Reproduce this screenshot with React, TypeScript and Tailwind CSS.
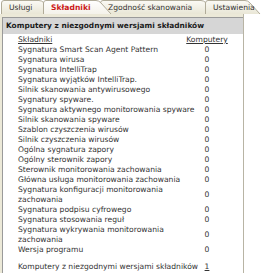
import React from "react";

const rows: { name: string; n: string }[] = [
  { name: "Sygnatura Smart Scan Agent Pattern", n: "0" },
  { name: "Sygnatura wirusa", n: "0" },
  { name: "Sygnatura IntelliTrap", n: "0" },
  { name: "Sygnatura wyjątków IntelliTrap.", n: "0" },
  { name: "Silnik skanowania antywirusowego", n: "0" },
  { name: "Sygnatury spyware.", n: "0" },
  { name: "Sygnatura aktywnego monitorowania spyware", n: "0" },
  { name: "Silnik skanowania spyware", n: "0" },
  { name: "Szablon czyszczenia wirusów", n: "0" },
  { name: "Silnik czyszczenia wirusów", n: "0" },
  { name: "Ogólna sygnatura zapory", n: "0" },
  { name: "Ogólny sterownik zapory", n: "0" },
  { name: "Sterownik monitorowania zachowania", n: "0" },
  { name: "Główna usługa monitorowania zachowania", n: "0" },
  { name: "Sygnatura konfiguracji monitorowania zachowania", n: "0" },
  { name: "Sygnatura podpisu cyfrowego", n: "0" },
  { name: "Sygnatura stosowania reguł", n: "0" },
  { name: "Sygnatura wykrywania monitorowania zachowania", n: "0" },
  { name: "Wersja programu", n: "0" },
];

function Tab({ label, w, active, id }: { label: string; w: number; active?: boolean; id: number }) {
  return (
    <div className={"relative h-[14px] shrink-0 " + (active ? "z-10" : "")} style={{ width: w }}>
      <svg className="absolute left-0 top-0" width={w + 12} height={14}>
        <defs>
          <linearGradient id={"tabg" + id} x1="0" y1="0" x2="0" y2="1">
            <stop offset="0" stopColor={active ? "#ffffff" : "#fbfaf5"} />
            <stop offset="1" stopColor={active ? "#f4f2ea" : "#e9e6d6"} />
          </linearGradient>
        </defs>
        <path
          d={`M0.5 14 L0.5 3 Q0.5 0.5 3 0.5 L${w - 4} 0.5 Q${w - 1} 0.5 ${w + 1} 3 L${w + 11} 14`}
          fill={`url(#tabg${id})`}
          stroke="#b0ab98"
          strokeWidth="1"
        />
      </svg>
      <span
        className={
          "relative flex h-full items-center pl-[8px] pt-[1px] text-[7.6px] leading-none " +
          (active ? "font-bold text-[#cc1a1a]" : "text-[#333]")
        }
      >
        {label}
      </span>
    </div>
  );
}

function Num({ children, link }: { children: React.ReactNode; link?: boolean }) {
  return (
    <span className={"flex w-[20px] shrink-0 justify-center whitespace-nowrap " + (link ? "underline" : "")}>
      {children}
    </span>
  );
}

export default function App() {
  return (
    <div
      className="h-[273px] w-[265px] overflow-hidden bg-white"
      style={{ fontFamily: '"DejaVu Sans", Verdana, sans-serif' }}
    >
      <div className="flex h-[14px] pl-[1px]">
        <Tab id={0} label="Usługi" w={42} />
        <Tab id={1} label="Składniki" w={57} active />
        <Tab id={2} label="Zgodność skanowania" w={105} />
        <Tab id={3} label="Ustawienia" w={44} />
      </div>
      <div className="h-[259px] w-[244px] border-r border-[#b8b4a4] bg-[#ece9d8] pl-[2px] pt-[3px]">
        <div className="h-full border-l border-t border-[#9a9a9a] bg-white">
          <div className="flex h-[16px] items-center bg-[#d6d6d6] pl-[3px] text-[7.4px] font-bold text-[#1a1a1a]">
            Komputery z niezgodnymi wersjami składników
          </div>
          <div className="pl-[15px] pt-[1px] text-[7.6px] leading-[10px] text-[#333]">
            <div className="flex items-center">
              <span className="w-[179px] shrink-0 underline">Składniki</span>
              <Num link>Komputery</Num>
            </div>
            {rows.map((r) => (
              <div key={r.name} className="flex items-center">
                <span className="w-[179px] shrink-0">{r.name}</span>
                <Num>{r.n}</Num>
              </div>
            ))}
            <div className="mt-[7px] flex items-center">
              <span className="w-[179px] shrink-0 whitespace-nowrap">Komputery z niezgodnymi wersjami składników</span>
              <Num link>1</Num>
            </div>
          </div>
        </div>
      </div>
    </div>
  );
}
